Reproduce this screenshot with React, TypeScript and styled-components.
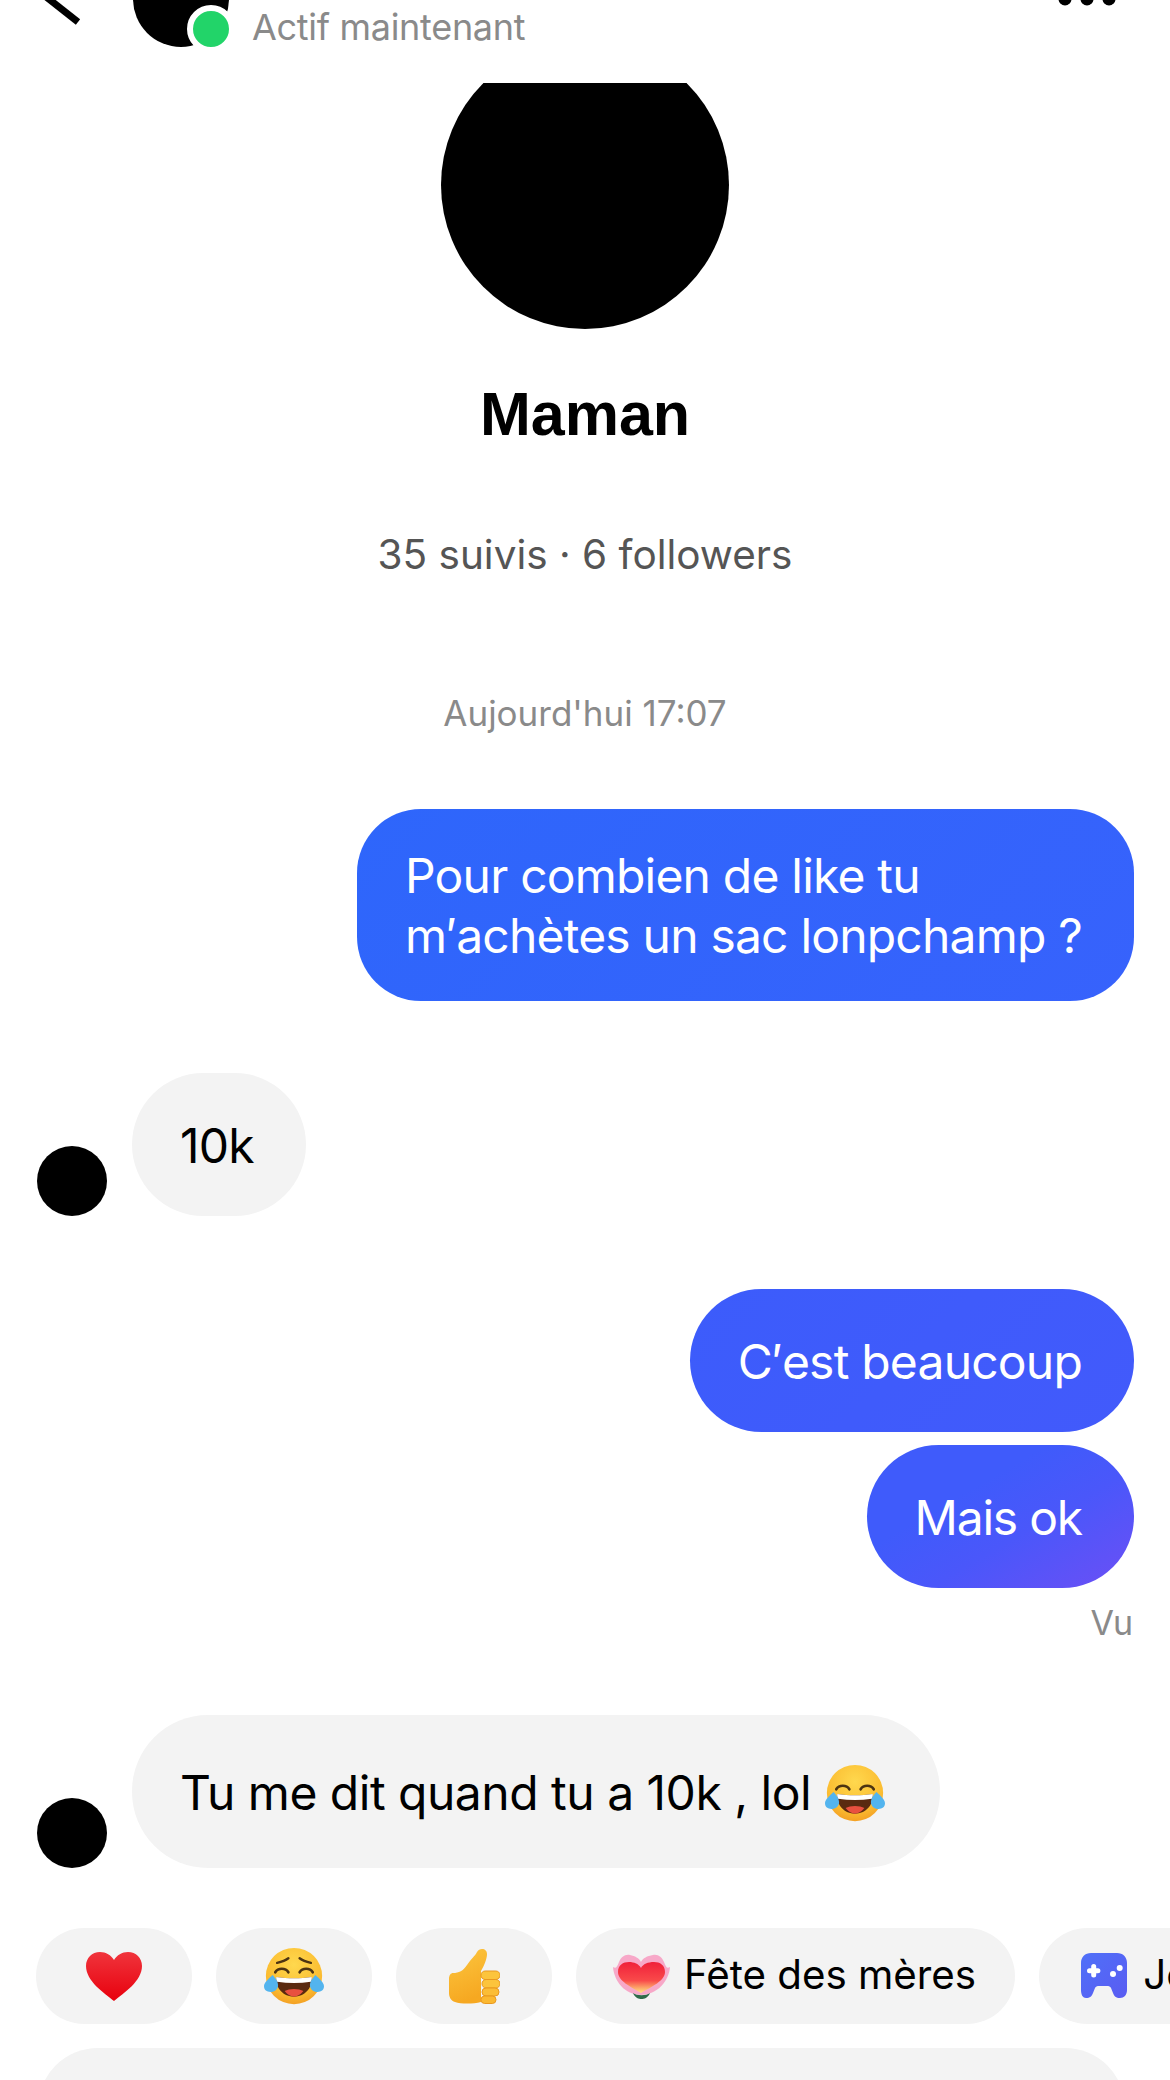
import styled, {createGlobalStyle} from "styled-components";

const GlobalStyle = createGlobalStyle`
	html, body {
		margin: 0;
		padding: 0;
		background: #fff;
	}
	* {
		box-sizing: border-box;
	}
`;

const FONT = `Inter, "Liberation Sans", Arial, sans-serif`;

const Page = styled.div`
	width: 1170px;
	height: 2080px;
	overflow: hidden;
	background: #fff;
	font-family: ${FONT};
	color: #000;
	display: flex;
	flex-direction: column;
`;

// header is cut by the top of the screenshot
const Header = styled.header`
	height: 83px;
	flex-shrink: 0;
	overflow: hidden;
`;
const HeaderRow = styled.div`
	margin-top: -49px;
	height: 96px;
	padding: 0 53px 0 43px;
	display: flex;
	align-items: flex-start;
`;
const BackIcon = styled.svg`
	width: 40px;
	height: 80px;
	flex-shrink: 0;
	margin-right: 50px;
`;
const HeaderAvatar = styled.div`
	width: 96px;
	height: 96px;
	flex-shrink: 0;
	position: relative;
	border-radius: 50%;
	background: #000;
`;
const OnlineDot = styled.span`
	position: absolute;
	right: -6px;
	bottom: -6px;
	width: 48px;
	height: 48px;
	border-radius: 50%;
	background: #22d469;
	border: 6px solid #fff;
`;
const Status = styled.div`
	margin-left: 23px;
	margin-top: 54px;
	font-size: 36px;
	line-height: 44px;
	letter-spacing: -0.3px;
	color: #8a8a8a;
	flex: 1;
`;
const DotsIcon = styled.svg`
	width: 60px;
	height: 60px;
	flex-shrink: 0;
`;

const Scroll = styled.main`
	flex: 1;
	overflow: hidden;
	display: flex;
	flex-direction: column;
`;

const Profile = styled.section`
	flex-shrink: 0;
	display: flex;
	flex-direction: column;
	align-items: center;
`;
const BigAvatar = styled.div`
	width: 288px;
	height: 288px;
	margin-top: -42px;
	border-radius: 50%;
	background: #000;
`;
const Name = styled.h1`
	margin: 49px 0 0;
	font-family: "Liberation Sans", Arial, sans-serif;
	font-size: 61px;
	line-height: 72px;
	font-weight: 700;
`;
const Stats = styled.div`
	margin-top: 80px;
	font-size: 40.5px;
	line-height: 50px;
	color: #555;
`;
const TimeLabel = styled.div`
	margin-top: 111px;
	font-size: 35px;
	line-height: 44px;
	color: #8a8a8a;
`;

const Thread = styled.section`
	flex-shrink: 0;
	padding: 0 36px 0 37px;
	display: flex;
	flex-direction: column;
`;
const Row = styled.div<{$mine?: boolean; $top: number}>`
	display: flex;
	justify-content: ${(props) => (props.$mine ? "flex-end" : "flex-start")};
	align-items: flex-end;
	gap: 25px;
	margin-top: ${(props) => props.$top}px;
`;
const SmallAvatar = styled.div`
	width: 70px;
	height: 70px;
	flex-shrink: 0;
	border-radius: 50%;
	background: #000;
`;
const Bubble = styled.div<{$bg?: string; $radius?: number; $padY?: number; $lineHeight?: number; $spacing?: number}>`
	padding: ${(props) => (props.$padY ?? 41) + 1}px 52px ${(props) => (props.$padY ?? 41) - 1}px 48px;
	font-size: 48px;
	line-height: ${(props) => props.$lineHeight ?? 61}px;
	letter-spacing: ${(props) => props.$spacing ?? -0.8}px;
	border-radius: ${(props) => props.$radius ?? 72}px;
	background: ${(props) => props.$bg ?? "#f3f3f3"};
	color: ${(props) => (props.$bg ? "#fff" : "#000")};
	white-space: pre-line;
`;
const IncomingText = styled.div`
	display: flex;
	align-items: center;
	gap: 14px;
	padding-right: 3px;
	letter-spacing: -0.5px;
`;
const Seen = styled.div`
	margin-top: 13px;
	text-align: right;
	padding-right: 2px;
	font-size: 34px;
	line-height: 44px;
	letter-spacing: -1px;
	color: #8a8a8a;
`;

const Chips = styled.div`
	flex-shrink: 0;
	margin-top: 60px;
	padding-left: 36px;
	display: flex;
	gap: 24px;
	overflow: hidden;
`;
const Chip = styled.div<{$square?: boolean}>`
	height: 96px;
	flex-shrink: 0;
	width: ${(props) => (props.$square ? "156px" : "auto")};
	padding: 0 ${(props) => (props.$square ? "0" : "39px")} 0 ${(props) => (props.$square ? "0" : "37px")};
	display: flex;
	align-items: center;
	justify-content: ${(props) => (props.$square ? "center" : "flex-start")};
	gap: 14px;
	border-radius: 48px;
	background: #f3f3f3;
	font-size: 40.3px;
	white-space: nowrap;
`;
const ChipLabel = styled.span`
	margin-top: -3px;
`;
const Composer = styled.div`
	margin: 24px 45px 0 38px;
	height: 100px;
	flex-shrink: 0;
	border-radius: 60px 60px 0 0;
	background: #f3f3f3;
`;

const Emoji = styled.svg<{$w: number; $h: number}>`
	width: ${(props) => props.$w}px;
	height: ${(props) => props.$h}px;
	flex-shrink: 0;
`;
const GamepadSvg = styled(Emoji)`
	margin-left: 3px;
`;

function HeartEmoji() {
	return (
		<Emoji $w={56} $h={49} viewBox="0 0 56 49">
			<defs>
				<linearGradient id="heartFill" x1="0" y1="0" x2="0" y2="1">
					<stop offset="0" stopColor="#f0343c" />
					<stop offset="1" stopColor="#e8000d" />
				</linearGradient>
			</defs>
			<path
				d="M28 49C18 41 0 29 0 14 0 6 6 0 14 0c6 0 11 3 14 8 3-5 8-8 14-8 8 0 14 6 14 14 0 15-18 27-28 35z"
				fill="url(#heartFill)"
			/>
		</Emoji>
	);
}

function LaughEmoji({worried}: {worried?: boolean}) {
	const id = worried ? "faceA" : "faceB";
	return (
		<Emoji $w={60} $h={60} viewBox="0 0 64 64">
			<defs>
				<radialGradient id={id} cx="0.5" cy="0.3" r="0.8">
					<stop offset="0" stopColor="#ffd84e" />
					<stop offset="0.65" stopColor="#fbbc30" />
					<stop offset="1" stopColor="#f0921e" />
				</radialGradient>
			</defs>
			<circle cx="32" cy="32" r="30" fill={`url(#${id})`} />
			{worried && (
				<path d="M14 18c4-1 8-2 12-5M50 18c-4-1-8-2-12-5" stroke="#4d3412" strokeWidth="2.6" strokeLinecap="round" fill="none" />
			)}
			<path d="M12 28c3-5 11-5 14 0M38 28c3-5 11-5 14 0" stroke="#4d3412" strokeWidth="2.8" strokeLinecap="round" fill="none" />
			<path d="M13 33c12 2 26 2 38 0 1 12-8 21-19 21S12 45 13 33z" fill="#5a2a10" />
			<path d="M22 48c5-3 15-3 20 0-3 4-7 6-10 6s-7-2-10-6z" fill="#e8503f" />
			<path d="M13 33c12 2 26 2 38 0 0 2 0 4-1 5-12 2-24 2-36 0-1-1-1-3-1-5z" fill="#fff" />
			<path d="M9 31c-4 4-9 8-9 12 0 4 3 6 7 6s8-3 8-7c0-4-3-8-6-11z" fill="#53b4ee" />
			<path d="M55 31c4 4 9 8 9 12 0 4-3 6-7 6s-8-3-8-7c0-4 3-8 6-11z" fill="#53b4ee" />
		</Emoji>
	);
}

function ThumbEmoji() {
	return (
		<Emoji $w={51} $h={55} viewBox="0 0 51 55">
			<defs>
				<linearGradient id="thumbFill" x1="0" y1="0" x2="0.3" y2="1">
					<stop offset="0" stopColor="#fcc63f" />
					<stop offset="1" stopColor="#f6a821" />
				</linearGradient>
			</defs>
			<path
				d="M4 24c6 0 10-2 14-8 4-6 8-9 10-13 1-2 3-3 5-3 3 0 5 2 5 5 0 5-3 12-6 17v31c-8 2-20 2-26 0-4-1-6-5-6-9V30c0-4 2-6 4-6z"
				fill="url(#thumbFill)"
			/>
			<rect x="32" y="22" width="19" height="8.5" rx="4.2" fill="#fcc43c" stroke="#e9981f" strokeWidth="1" />
			<rect x="33" y="30.5" width="18" height="8.5" rx="4.2" fill="#fcc43c" stroke="#e9981f" strokeWidth="1" />
			<rect x="33" y="39" width="17" height="8" rx="4" fill="#fbbd36" stroke="#e9981f" strokeWidth="1" />
			<rect x="32" y="47" width="15" height="7.5" rx="3.7" fill="#fbb830" stroke="#e9981f" strokeWidth="1" />
		</Emoji>
	);
}

function FlowerHeartEmoji() {
	return (
		<Emoji $w={57} $h={45} viewBox="0 0 57 45">
			<defs>
				<linearGradient id="flowerFill" x1="0" y1="0" x2="0" y2="1">
					<stop offset="0" stopColor="#f0203a" />
					<stop offset="0.6" stopColor="#f94a4a" />
					<stop offset="1" stopColor="#ffe680" />
				</linearGradient>
			</defs>
			<path
				d="M28 41C12 41 1 27 0 13c3 2 4 0 6-5 2-5 6-8 11-7 5 1 9 3 11 7 2-4 6-6 12-7 5-1 9 2 11 7 2 5 3 7 6 5-1 14-13 28-29 28z"
				fill="#f7a8c8"
			/>
			<path
				d="M28 39C18 33 5 27 5 18c0-7 5-10 11-10 5 0 10 2 12 6 2-4 7-6 13-6s11 3 11 10c0 9-14 15-24 21z"
				fill="url(#flowerFill)"
			/>
			<path d="M20 39c4 3 13 3 17 0-2 5-6 6-8.500 6-2.500 0-6.500-1-8.500-6z" fill="#2f6b4a" />
		</Emoji>
	);
}

function GamepadEmoji() {
	return (
		<GamepadSvg $w={50} $h={50} viewBox="0 0 50 50">
			<defs>
				<linearGradient id="padFill" x1="0" y1="0" x2="1" y2="1">
					<stop offset="0" stopColor="#4f70f8" />
					<stop offset="1" stopColor="#5a5cf2" />
				</linearGradient>
			</defs>
			<path
				d="M12 2h26c6 0 10 4 10 10v27c0 5-3 8-7 8-4 0-6-2-7-5l-2-5c-.5-1-1.500-2-3-2H19c-1.500 0-2.500 1-3 2l-2 5c-1 3-3 5-7 5-3 0-5-3-5-8V12C2 6 6 2 12 2z"
				fill="url(#padFill)"
			/>
			<path d="M10.500 19.700h8.400M14.700 15.500v8.400" stroke="#fff" strokeWidth="5" strokeLinecap="round" fill="none" />
			<circle cx="34" cy="23" r="3" fill="#fff" />
			<circle cx="40.700" cy="17" r="3" fill="#fff" />
		</GamepadSvg>
	);
}

function App() {
	return (
		<>
			<GlobalStyle />
			<Page>
				<Header>
					<HeaderRow>
						<BackIcon viewBox="0 0 40 80">
							<path d="M35 71L2 45" stroke="#000" strokeWidth="7" fill="none" />
						</BackIcon>
						<HeaderAvatar>
							<OnlineDot />
						</HeaderAvatar>
						<Status>Actif maintenant</Status>
						<DotsIcon viewBox="0 0 60 60">
							<circle cx="8" cy="48" r="6.5" fill="#000" />
							<circle cx="30" cy="48" r="6.5" fill="#000" />
							<circle cx="52" cy="48" r="6.5" fill="#000" />
						</DotsIcon>
					</HeaderRow>
				</Header>
				<Scroll>
					<Profile>
						<BigAvatar />
						<Name>Maman</Name>
						<Stats>35 suivis · 6 followers</Stats>
						<TimeLabel>Aujourd'hui 17:07</TimeLabel>
					</Profile>
					<Thread>
						<Row $mine $top={74}>
							<Bubble $radius={64} $padY={36} $lineHeight={60} $bg="linear-gradient(135deg, #2e66fb, #3762fc)">
								{"Pour combien de like tu\nm′achètes un sac lonpchamp ?"}
							</Bubble>
						</Row>
						<Row $top={72}>
							<SmallAvatar />
							<Bubble>10k</Bubble>
						</Row>
						<Row $mine $top={73}>
							<Bubble $bg="linear-gradient(135deg, #3c5cfb, #425afb)">C′est beaucoup</Bubble>
						</Row>
						<Row $mine $top={13}>
							<Bubble $spacing={-1.2} $bg="linear-gradient(150deg, #3f5bfb 35%, #4a57fa 60%, #6c4ff5 100%)">Mais ok</Bubble>
						</Row>
						<Seen>Vu</Seen>
						<Row $top={70}>
							<SmallAvatar />
							<Bubble $radius={76} $padY={46}>
								<IncomingText>
									Tu me dit quand tu a 10k , lol
									<LaughEmoji />
								</IncomingText>
							</Bubble>
						</Row>
					</Thread>
					<Chips>
						<Chip $square>
							<HeartEmoji />
						</Chip>
						<Chip $square>
							<LaughEmoji worried />
						</Chip>
						<Chip $square>
							<ThumbEmoji />
						</Chip>
						<Chip>
							<FlowerHeartEmoji />
							<ChipLabel>Fête des mères</ChipLabel>
						</Chip>
						<Chip>
							<GamepadEmoji />
							<ChipLabel>Jeux</ChipLabel>
						</Chip>
					</Chips>
					<Composer />
				</Scroll>
			</Page>
		</>
	);
}
export default App;
